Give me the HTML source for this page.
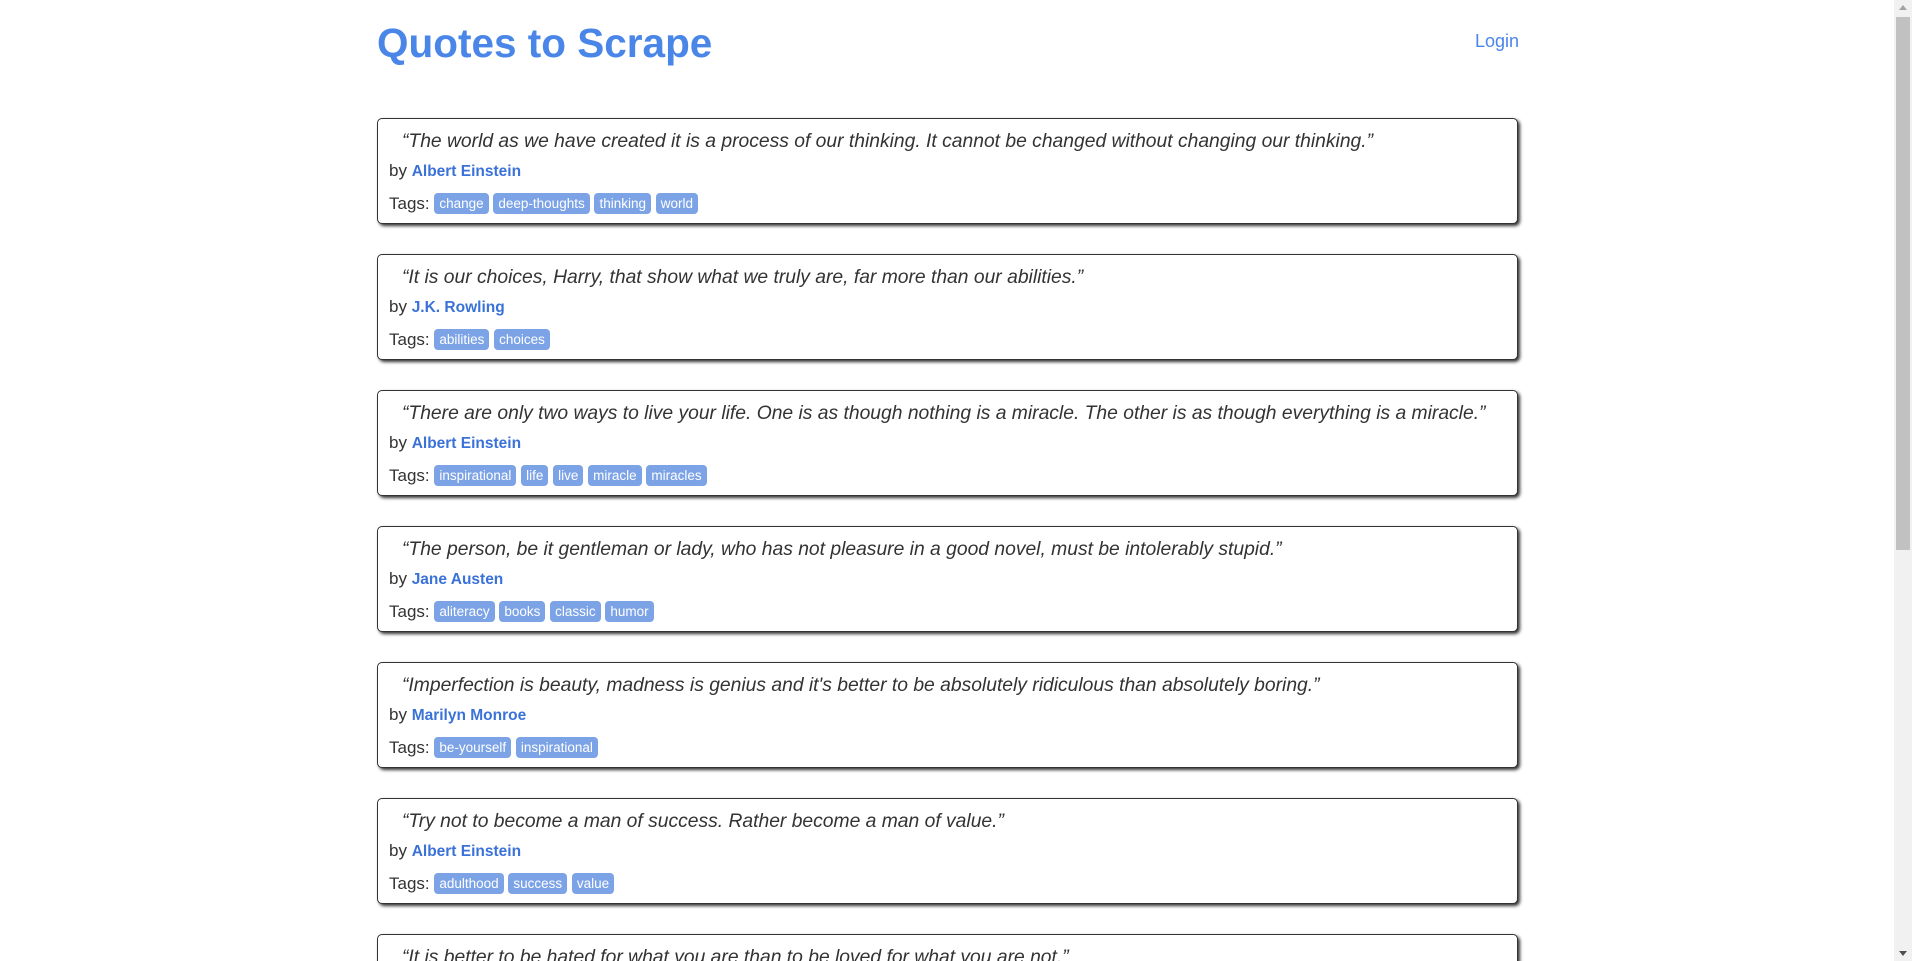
<!DOCTYPE html>
<html><head><meta charset="utf-8"><style>
html,body{margin:0;padding:0;background:#fff;overflow:hidden;}
body{width:1912px;height:961px;position:relative;font-family:"Liberation Sans",sans-serif;color:#333;}
h1{position:absolute;left:377px;top:20px;margin:0;font-size:40.5px;font-weight:bold;color:#4a86e8;}
.login{position:absolute;left:1475px;top:31px;font-size:18px;color:#4a86e8;}
.q{position:absolute;left:377px;width:1139px;height:104px;border:1px solid #333;border-radius:5px;box-shadow:2px 2px 3px #333;background:#fff;}
.t{position:absolute;left:24px;top:9px;line-height:28px;font-size:19.3px;font-style:italic;white-space:nowrap;}
.b{position:absolute;left:11px;top:37px;line-height:30px;font-size:17px;}
.b a{color:#3a72d8;font-weight:bold;font-size:15.5px;}
.g{position:absolute;left:11px;top:69px;line-height:32px;font-size:17px;}
.tag{display:inline-block;background:#7ca3e6;color:#fff;font-size:13.5px;line-height:21px;padding:0 5px;border-radius:4px;margin-right:0;vertical-align:1px;}
.sb{position:absolute;right:0;top:0;width:18px;height:961px;background:#f1f1f1;}
.th{position:absolute;left:2px;top:17px;width:14px;height:533px;background:#c1c1c1;}
</style></head><body>
<h1>Quotes to Scrape</h1>
<div class="login">Login</div>

<div class="q" style="top:118px"><div class="t">“The world as we have created it is a process of our thinking. It cannot be changed without changing our thinking.”</div><div class="b">by <a>Albert Einstein</a></div><div class="g">Tags: <span class="tag">change</span> <span class="tag">deep-thoughts</span> <span class="tag">thinking</span> <span class="tag">world</span></div></div>

<div class="q" style="top:254px"><div class="t">“It is our choices, Harry, that show what we truly are, far more than our abilities.”</div><div class="b">by <a>J.K. Rowling</a></div><div class="g">Tags: <span class="tag">abilities</span> <span class="tag">choices</span></div></div>

<div class="q" style="top:390px"><div class="t">“There are only two ways to live your life. One is as though nothing is a miracle. The other is as though everything is a miracle.”</div><div class="b">by <a>Albert Einstein</a></div><div class="g">Tags: <span class="tag">inspirational</span> <span class="tag">life</span> <span class="tag">live</span> <span class="tag">miracle</span> <span class="tag">miracles</span></div></div>

<div class="q" style="top:526px"><div class="t">“The person, be it gentleman or lady, who has not pleasure in a good novel, must be intolerably stupid.”</div><div class="b">by <a>Jane Austen</a></div><div class="g">Tags: <span class="tag">aliteracy</span> <span class="tag">books</span> <span class="tag">classic</span> <span class="tag">humor</span></div></div>

<div class="q" style="top:662px"><div class="t">“Imperfection is beauty, madness is genius and it's better to be absolutely ridiculous than absolutely boring.”</div><div class="b">by <a>Marilyn Monroe</a></div><div class="g">Tags: <span class="tag">be-yourself</span> <span class="tag">inspirational</span></div></div>

<div class="q" style="top:798px"><div class="t">“Try not to become a man of success. Rather become a man of value.”</div><div class="b">by <a>Albert Einstein</a></div><div class="g">Tags: <span class="tag">adulthood</span> <span class="tag">success</span> <span class="tag">value</span></div></div>

<div class="q" style="top:934px;"><div class="t">“It is better to be hated for what you are than to be loved for what you are not.”</div></div>

<div class="sb"><div class="th"></div><div style="position:absolute;left:5px;top:5px;width:0;height:0;border-left:4px solid transparent;border-right:4px solid transparent;border-bottom:5px solid #a3a3a3;"></div><div style="position:absolute;left:5px;bottom:5px;width:0;height:0;border-left:4px solid transparent;border-right:4px solid transparent;border-top:5px solid #505050;"></div></div>
</body></html>
